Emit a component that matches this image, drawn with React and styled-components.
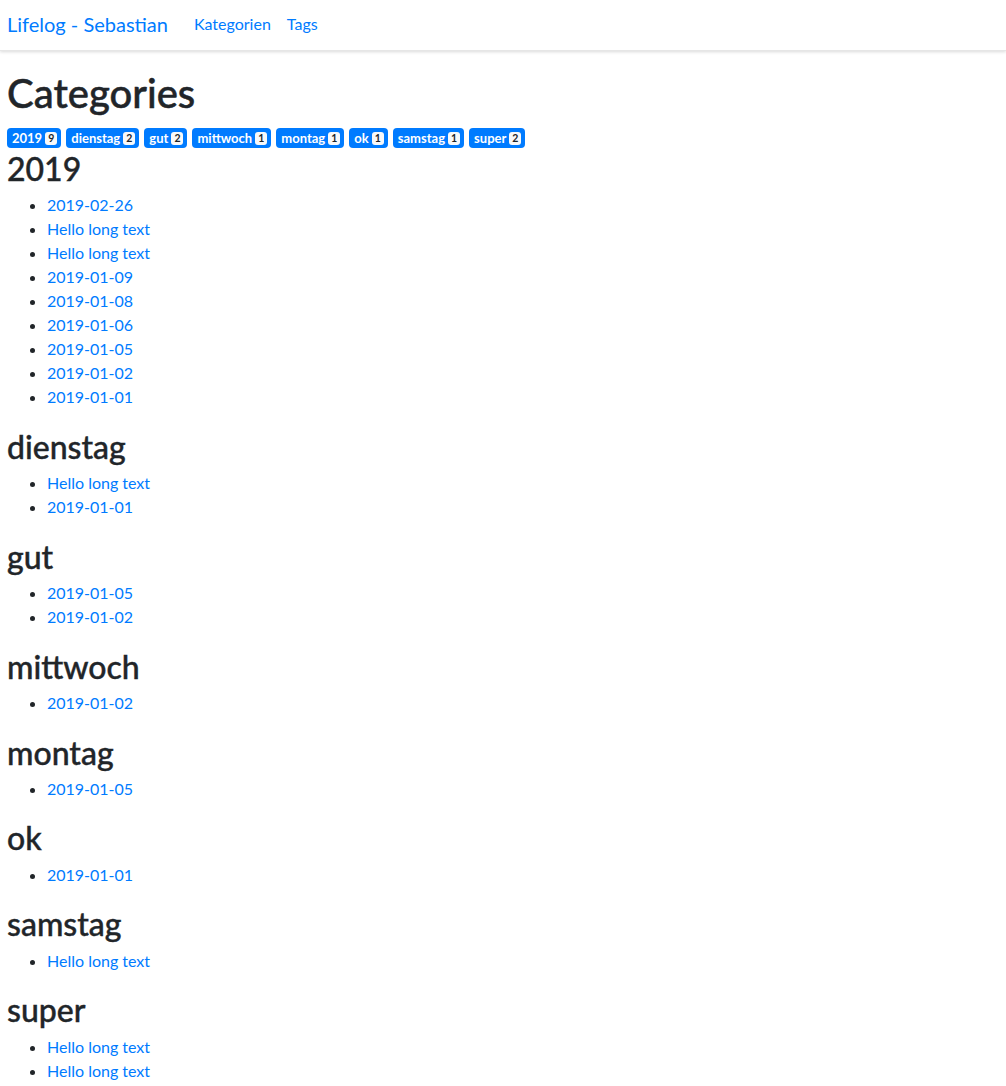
import React from "react";
import styled, { createGlobalStyle } from "styled-components";

const Global = createGlobalStyle`
  html, body { margin: 0; padding: 0; background: #fff; }
  body {
    font-family: "Segoe UI", Lato, "Noto Sans", "Liberation Sans", sans-serif;
    font-size: 16px;
    line-height: 1.5;
    color: #212529;
  }
`;

const Navbar = styled.nav`
  display: flex;
  align-items: center;
  height: 51px;
  padding: 0 7px 3px;
  box-shadow: 0 1px 3px rgba(0, 0, 0, 0.15);
  border-bottom: 1px solid #e6e6e6;
  box-sizing: border-box;
`;

const Brand = styled.a`
  font-size: 20px;
  color: #007bff;
  text-decoration: none;
  margin-right: 18px;
  line-height: 30px;
`;

const NavLink = styled.a`
  color: #007bff;
  text-decoration: none;
  padding: 0 8px;
`;

const Main = styled.main`
  padding: 0 7px;
`;

const Title = styled.h1`
  font-size: 40px;
  font-weight: 500;
  line-height: 1.2;
  margin: 18px 0 11px;
  -webkit-text-stroke: 0.5px #212529;
`;

const BadgeRow = styled.div`
  display: flex;
  flex-wrap: wrap;
  gap: 5px;
  margin-bottom: 2px;
`;

const Badge = styled.a`
  display: inline-flex;
  align-items: center;
  gap: 3px;
  background: #007bff;
  color: #fff;
  font-size: 13px;
  font-weight: 700;
  line-height: 1;
  padding: 0 4px 0 5px;
  border-radius: 4px;
  text-decoration: none;
  height: 20px;
  box-sizing: border-box;
`;

const Count = styled.span`
  display: inline-flex;
  align-items: center;
  justify-content: center;
  height: 13px;
  min-width: 11px;
  box-sizing: border-box;
  background: #f8f9fa;
  color: #212529;
  font-size: 10.5px;
  font-weight: 700;
  line-height: 1;
  padding: 0 3px;
  border-radius: 3px;
`;

const Heading = styled.h2`
  font-size: 32px;
  font-weight: 500;
  line-height: 1.2;
  margin: 1px 0 5px;
  -webkit-text-stroke: 0.4px #212529;
`;

const List = styled.ul`
  margin: 0 0 18.5px;
  padding-left: 40px;
`;

const Item = styled.li`
  line-height: 24px;
`;

const ItemLink = styled.a`
  color: #007bff;
  text-decoration: none;
`;

const categories = [
  ["2019", ["2019-02-26", "Hello long text", "Hello long text", "2019-01-09", "2019-01-08", "2019-01-06", "2019-01-05", "2019-01-02", "2019-01-01"]],
  ["dienstag", ["Hello long text", "2019-01-01"]],
  ["gut", ["2019-01-05", "2019-01-02"]],
  ["mittwoch", ["2019-01-02"]],
  ["montag", ["2019-01-05"]],
  ["ok", ["2019-01-01"]],
  ["samstag", ["Hello long text"]],
  ["super", ["Hello long text", "Hello long text"]],
];

export default function App() {
  return (
    <>
      <Global />
      <Navbar>
        <Brand href="#">Lifelog - Sebastian</Brand>
        <NavLink href="#">Kategorien</NavLink>
        <NavLink href="#">Tags</NavLink>
      </Navbar>
      <Main>
        <Title>Categories</Title>
        <BadgeRow>
          {categories.map(([name, items]) => (
            <Badge key={name} href="#">
              {name}
              <Count>{items.length}</Count>
            </Badge>
          ))}
        </BadgeRow>
        {categories.map(([name, items]) => (
          <section key={name}>
            <Heading>{name}</Heading>
            <List>
              {items.map((it, i) => (
                <Item key={i}>
                  <ItemLink href="#">{it}</ItemLink>
                </Item>
              ))}
            </List>
          </section>
        ))}
      </Main>
    </>
  );
}
